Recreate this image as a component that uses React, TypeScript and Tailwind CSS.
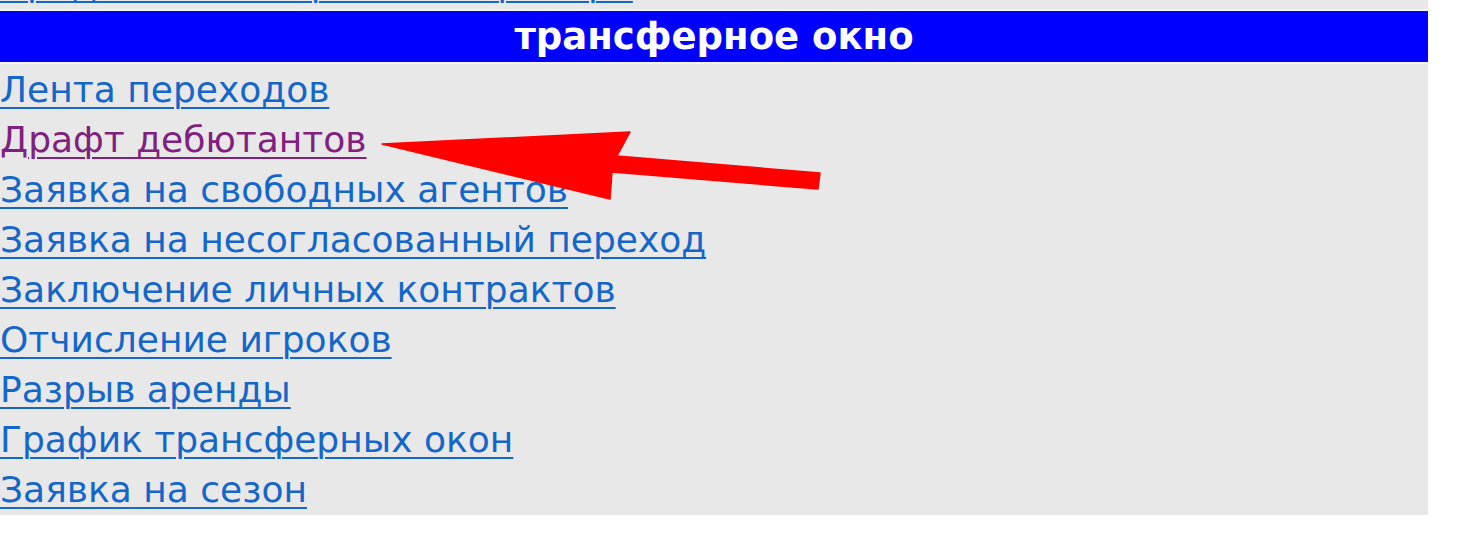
import React from 'react';

const links: { label: string; visited?: boolean }[] = [
  { label: 'Лента переходов' },
  { label: 'Драфт дебютантов', visited: true },
  { label: 'Заявка на свободных агентов' },
  { label: 'Заявка на несогласованный переход' },
  { label: 'Заключение личных контрактов' },
  { label: 'Отчисление игроков' },
  { label: 'Разрыв аренды' },
  { label: 'График трансферных окон' },
  { label: 'Заявка на сезон' },
];

const Arrow: React.FC = () => (
  <svg className="absolute left-0 top-0 pointer-events-none" width="1460" height="534" viewBox="0 0 1460 534">
    <polygon
      points="382,144 630,132 617,156 820,173 818,189 612,172 610,199"
      fill="#ff0000"
      stroke="#ff0000"
      strokeWidth="1.5"
      strokeLinejoin="round"
    />
  </svg>
);

export default function App() {
  return (
    <div
      className="relative w-[1460px] h-[534px] bg-white overflow-hidden"
      style={{ fontFamily: '"DejaVu Sans", Tahoma, sans-serif' }}
    >
      <div className="w-[1428px] bg-[#e8e8e8]">
        {/* previous section, only its last row's bottom is visible */}
        <div className="h-[9px] overflow-hidden flex items-end">
          <a className="text-[36px] leading-[50px] text-[#1467c8] underline decoration-2 underline-offset-[5px] whitespace-nowrap">
            Продление контр-ов без тренера
          </a>
        </div>
        <div className="border-y-2 border-[#f4f4ec] bg-[#0000ff] h-[55px] flex items-center justify-center">
          <span className="text-white font-bold text-[37px] leading-none">трансферное окно</span>
        </div>
        <div className="flex flex-col pb-[1px]">
          {links.map((l) => (
            <div key={l.label} className="h-[50px] flex items-center">
              <a
                className={`text-[36px] leading-[50px] pt-[2px] underline decoration-2 underline-offset-[5px] whitespace-nowrap ${
                  l.visited ? 'text-[#80207f]' : 'text-[#1467c8]'
                }`}
              >
                {l.label}
              </a>
            </div>
          ))}
        </div>
      </div>
      <Arrow />
    </div>
  );
}
